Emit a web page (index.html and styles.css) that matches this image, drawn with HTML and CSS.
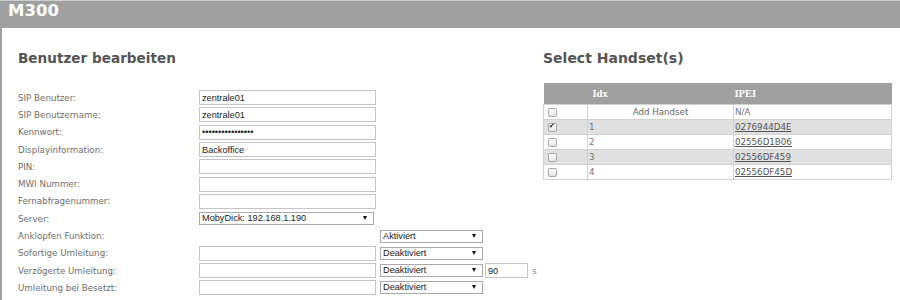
FILE: index.html
```html
<!DOCTYPE html>
<html lang="de">
<head>
  <meta charset="UTF-8" />
  <title>M300</title>
  <link rel="stylesheet" href="styles.css">
</head>
<body>
  <div class="topbar">
    <h1>M300</h1>
  </div>

  <div class="page">
    <section class="editor">
      <h2>Benutzer bearbeiten</h2>
      <form class="user-form">
        <label>SIP Benutzer:</label>
        <input type="text" value="zentrale01">

        <label>SIP Benutzername:</label>
        <input type="text" value="zentrale01">

        <label>Kennwort:</label>
        <input type="password" value="geheim1234567890">

        <label>Displayinformation:</label>
        <input type="text" value="Backoffice">

        <label>PIN:</label>
        <input type="text">

        <label>MWI Nummer:</label>
        <input type="text">

        <label>Fernabfragenummer:</label>
        <input type="text">

        <label>Server:</label>
        <span class="select server"><select><option>MobyDick: 192.168.1.190</option></select></span>

        <label>Anklopfen Funktion:</label>
        <span class="select col3"><select><option>Aktiviert</option></select></span>

        <label>Sofortige Umleitung:</label>
        <input type="text">
        <span class="select"><select><option>Deaktiviert</option></select></span>

        <label>Verzögerte Umleitung:</label>
        <input type="text">
        <span class="select"><select><option>Deaktiviert</option></select></span>
        <input type="text" class="seconds" value="90">
        <span class="unit">s</span>

        <label>Umleitung bei Besetzt:</label>
        <input type="text">
        <span class="select"><select><option>Deaktiviert</option></select></span>
      </form>
    </section>

    <section class="handsets">
      <h2>Select Handset(s)</h2>
      <table class="handset-table">
        <thead>
          <tr>
            <th class="col-check"></th>
            <th class="col-idx">Idx</th>
            <th>IPEI</th>
          </tr>
        </thead>
        <tbody>
          <tr>
            <td><input type="checkbox"></td>
            <td class="center">Add Handset</td>
            <td>N/A</td>
          </tr>
          <tr class="alt">
            <td><input type="checkbox" checked></td>
            <td>1</td>
            <td><a href="#">0276944D4E</a></td>
          </tr>
          <tr>
            <td><input type="checkbox"></td>
            <td>2</td>
            <td><a href="#">02556D1B06</a></td>
          </tr>
          <tr class="alt">
            <td><input type="checkbox"></td>
            <td>3</td>
            <td><a href="#">02556DF459</a></td>
          </tr>
          <tr>
            <td><input type="checkbox"></td>
            <td>4</td>
            <td><a href="#">02556DF45D</a></td>
          </tr>
        </tbody>
      </table>
    </section>
  </div>
</body>
</html>
```

FILE: styles.css
```css
body {
  margin: 0;
  background: #fff;
  font-family: "DejaVu Sans", Verdana, sans-serif;
  color: #666;
  overflow: hidden;
}
.topbar {
  height: 27px;
  border-top: 1px solid #cdcdcd;
  background: #a0a0a0;
  padding-left: 8px;
}
.topbar h1 {
  margin: 0;
  font-size: 16.5px;
  line-height: 20px;
  color: #fff;
}
.page {
  display: flex;
  border-left: 2px solid #a0a0a0;
  min-height: 272px;
}
h2 {
  margin: 23px 0 0;
  font-size: 14px;
  line-height: 14px;
  color: #555;
}
.editor {
  width: 525px;
  padding-left: 16px;
}
.editor h2 {
  font-size: 13.6px;
}
.user-form {
  margin-top: 24px;
  display: grid;
  grid-template-columns: 181px 181px 105px 47px auto;
  grid-auto-rows: 17.3px;
  align-items: center;
  font-size: 8.7px;
}
.user-form label {
  grid-column: 1;
  color: #6e6e6e;
}
.user-form input {
  box-sizing: border-box;
  width: 177px;
  height: 15px;
  margin: 0;
  padding: 0 2px;
  border: 1px solid #c4c4c4;
  font-family: "Liberation Sans", Arial, sans-serif;
  font-size: 9.2px;
  color: #222;
  outline: none;
}
.user-form input.seconds {
  width: 43px;
}
.user-form .unit {
  color: #888;
  font-size: 9px;
}
.select {
  position: relative;
  display: inline-block;
  width: 103px;
  height: 13px;
}
.select.server {
  width: 175px;
}
.select.col3 {
  grid-column: 3;
}
.select select {
  appearance: none;
  box-sizing: border-box;
  width: 100%;
  height: 13px;
  margin: 0;
  padding: 0 0 0 2px;
  border: 1px solid #a9a9a9;
  background: #fff;
  font-family: "Liberation Sans", Arial, sans-serif;
  font-size: 9.2px;
  line-height: 11px;
  color: #222;
}
.select::after {
  content: "";
  position: absolute;
  right: 7px;
  top: 4px;
  border-left: 2.5px solid transparent;
  border-right: 2.5px solid transparent;
  border-top: 4px solid #111;
}
.handsets {
  width: 349px;
}
.handset-table {
  margin-top: 18px;
  width: 349px;
  border-collapse: collapse;
  font-size: 8.7px;
  color: #777;
}
.handset-table th {
  height: 21px;
  padding: 0 1px;
  background: #a0a0a0;
  color: #fff;
  text-align: left;
  font-family: "Liberation Serif", "Times New Roman", serif;
  font-size: 10.5px;
  font-weight: bold;
}
.handset-table th.col-check {
  width: 42px;
}
.handset-table th.col-idx {
  width: 140px;
  padding-left: 5px;
}
.handset-table td {
  height: 14px;
  padding: 0 1px;
  border: 1px solid #d2d2d2;
  line-height: 13px;
}
.handset-table td.center {
  text-align: center;
  color: #666;
}
.handset-table tr.alt td {
  background: #e0e0e0;
}
.handset-table a {
  color: #555;
}
.handset-table input[type="checkbox"] {
  appearance: none;
  position: relative;
  box-sizing: border-box;
  width: 9px;
  height: 9px;
  margin: 0 0 0 3px;
  border: 1px solid #a8a8a8;
  border-radius: 2px;
  background: linear-gradient(#fdfdfd, #e4e4e4);
  vertical-align: middle;
}
.handset-table input[type="checkbox"]:checked::after {
  content: "\2714";
  position: absolute;
  left: 0;
  top: -2px;
  font-size: 7px;
  color: #222;
}
```
